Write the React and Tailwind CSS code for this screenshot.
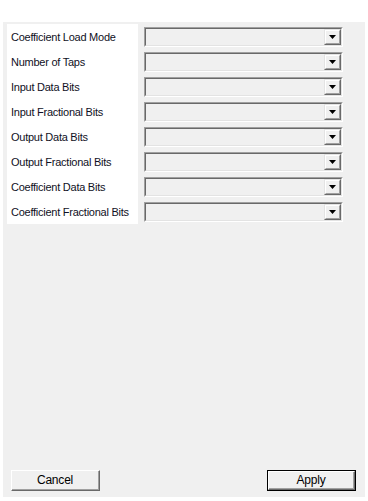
import React from 'react';

const fields = [
  'Coefficient Load Mode',
  'Number of Taps',
  'Input Data Bits',
  'Input Fractional Bits',
  'Output Data Bits',
  'Output Fractional Bits',
  'Coefficient Data Bits',
  'Coefficient Fractional Bits',
];

const ComboBox = () => (
  <div className="w-[199px] h-[20px] border-t border-l border-t-[#a0a0a0] border-l-[#a0a0a0] border-b border-r border-b-white border-r-white">
    <div className="w-full h-full flex justify-end bg-[#f0f0f0] border-t border-l border-t-[#696969] border-l-[#696969] border-b border-r border-b-[#e3e3e3] border-r-[#e3e3e3]">
      <div className="w-[17px] h-full border-t border-l border-t-[#e3e3e3] border-l-[#e3e3e3] border-b border-r border-b-[#696969] border-r-[#696969]">
        <div className="w-full h-full flex items-center justify-center bg-[#f0f0f0] border-t border-l border-t-white border-l-white border-b border-r border-b-[#a0a0a0] border-r-[#a0a0a0]">
          <svg width="7" height="4" viewBox="0 0 7 4">
            <path d="M0 0h7L3.5 4z" fill="#000" />
          </svg>
        </div>
      </div>
    </div>
  </div>
);

const Button = ({ label, primary }) => (
  <div
    className={
      primary
        ? 'w-[89px] h-[21px] border border-black'
        : 'w-[89px] h-[21px]'
    }
  >
    <div className="w-full h-full border-t border-l border-t-white border-l-white border-b border-r border-b-[#696969] border-r-[#696969]">
      <div className="w-full h-full flex items-center justify-center bg-[#f0f0f0] border-b border-r border-b-[#a0a0a0] border-r-[#a0a0a0] text-[12px] tracking-[-0.2px] text-black">
        {label}
      </div>
    </div>
  </div>
);

export default function App() {
  return (
    <div
      className="w-[368px] h-[501px] bg-white pt-[22px] pl-[3px]"
      style={{ fontFamily: '"Liberation Sans", Arial, sans-serif' }}
    >
      <div className="w-[362px] h-[475px] bg-[#f0f0f0] flex flex-col justify-between">
        <div className="flex pt-[2px] pl-[4px] gap-[6px]">
          <div className="w-[131px] bg-white flex flex-col">
            {fields.map((f) => (
              <div key={f} className="h-[25px] pt-[3px] pl-[4px] flex items-start">
                <div className="h-[20px] flex items-center text-[11px] tracking-[-0.25px] text-[#101024] whitespace-nowrap">
                  {f}
                </div>
              </div>
            ))}
          </div>
          <div className="flex flex-col">
            {fields.map((f) => (
              <div key={f} className="h-[25px] pt-[3px]">
                <ComboBox />
              </div>
            ))}
          </div>
        </div>
        <div className="flex justify-between pl-[8px] pr-[9px] pb-[6px]">
          <Button label="Cancel" />
          <Button label="Apply" primary />
        </div>
      </div>
    </div>
  );
}
